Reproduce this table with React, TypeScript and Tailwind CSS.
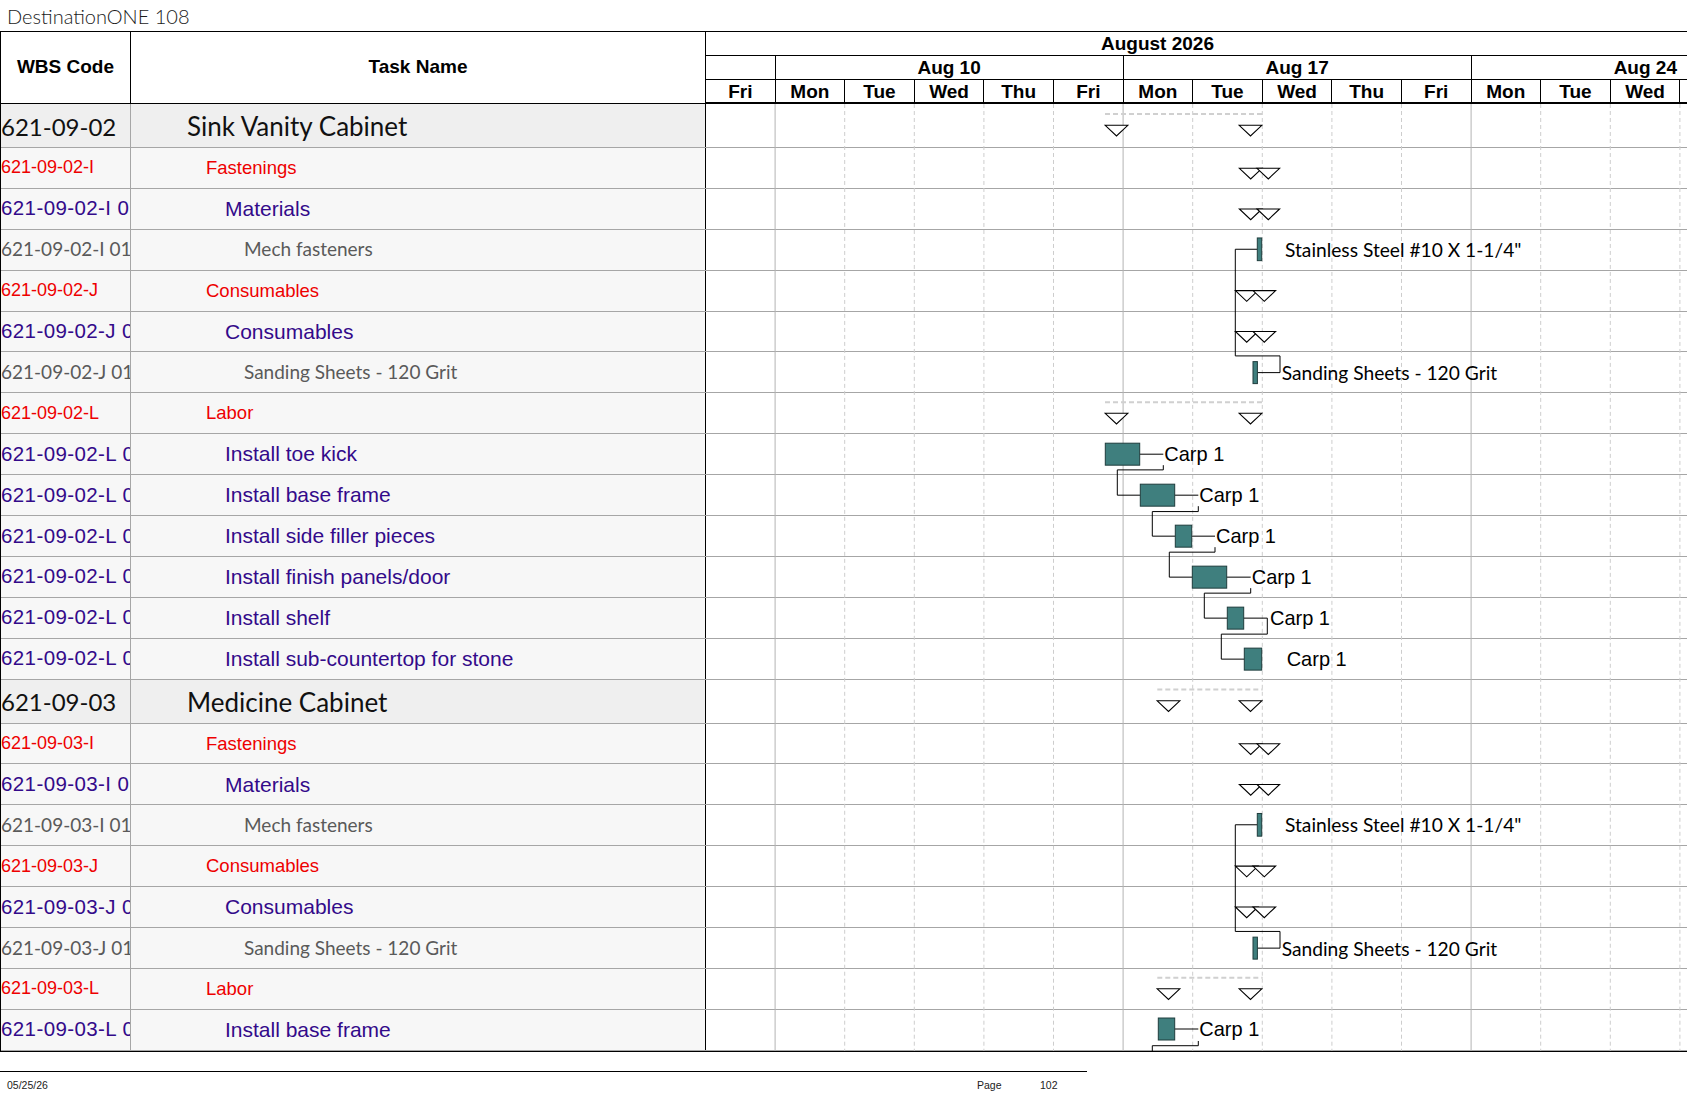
import React from 'react'

// Gantt print view — day columns are 69.6px wide, chart starts at x=706
const D = 69.6
const days = ['Fri', 'Mon', 'Tue', 'Wed', 'Thu', 'Fri', 'Mon', 'Tue', 'Wed', 'Thu', 'Fri', 'Mon', 'Tue', 'Wed']

type Level = 0 | 1 | 2 | 3

interface Row {
  code: string
  name: string
  level: Level
}

const rows: Row[] = [
  { code: '621-09-02', name: 'Sink Vanity Cabinet', level: 0 },
  { code: '621-09-02-I', name: 'Fastenings', level: 1 },
  { code: '621-09-02-I 01', name: 'Materials', level: 2 },
  { code: '621-09-02-I 01-01', name: 'Mech fasteners', level: 3 },
  { code: '621-09-02-J', name: 'Consumables', level: 1 },
  { code: '621-09-02-J 01', name: 'Consumables', level: 2 },
  { code: '621-09-02-J 01-01', name: 'Sanding Sheets - 120 Grit', level: 3 },
  { code: '621-09-02-L', name: 'Labor', level: 1 },
  { code: '621-09-02-L 01', name: 'Install toe kick', level: 2 },
  { code: '621-09-02-L 02', name: 'Install base frame', level: 2 },
  { code: '621-09-02-L 03', name: 'Install side filler pieces', level: 2 },
  { code: '621-09-02-L 04', name: 'Install finish panels/door', level: 2 },
  { code: '621-09-02-L 05', name: 'Install shelf', level: 2 },
  { code: '621-09-02-L 06', name: 'Install sub-countertop for stone', level: 2 },
  { code: '621-09-03', name: 'Medicine Cabinet', level: 0 },
  { code: '621-09-03-I', name: 'Fastenings', level: 1 },
  { code: '621-09-03-I 01', name: 'Materials', level: 2 },
  { code: '621-09-03-I 01-01', name: 'Mech fasteners', level: 3 },
  { code: '621-09-03-J', name: 'Consumables', level: 1 },
  { code: '621-09-03-J 01', name: 'Consumables', level: 2 },
  { code: '621-09-03-J 01-01', name: 'Sanding Sheets - 120 Grit', level: 3 },
  { code: '621-09-03-L', name: 'Labor', level: 1 },
  { code: '621-09-03-L 01', name: 'Install base frame', level: 2 },
]

const levelConfig = {
  0: {
    row: 'h-[44px]',
    bg: 'bg-[#efefef]',
    code: "text-[24px] text-[#111] font-['Lato',sans-serif] pt-[2px]",
    name: "pl-[56px] text-[26px] text-[#111] font-['Lato',sans-serif] pt-[2px]",
  },
  1: {
    row: 'h-[40.9px]',
    bg: 'bg-[#f7f7f7]',
    code: "text-[18px] text-[#ee0000] font-['Liberation_Sans',Arial,sans-serif]",
    name: "pl-[75px] text-[18.5px] text-[#ee0000] font-['Liberation_Sans',Arial,sans-serif]",
  },
  2: {
    row: 'h-[40.9px]',
    bg: 'bg-[#f7f7f7]',
    code: "text-[20.5px] tracking-[0.4px] text-[#330a8a] font-['Liberation_Sans',Arial,sans-serif]",
    name: "pl-[94px] text-[21px] text-[#330a8a] font-['Liberation_Sans',Arial,sans-serif]",
  },
  3: {
    row: 'h-[40.9px]',
    bg: 'bg-[#f7f7f7]',
    code: "text-[19px] text-[#5a5a5a] font-['Lato',sans-serif]",
    name: "pl-[113px] text-[19px] text-[#5a5a5a] font-['Lato',sans-serif]",
  },
}

const TEAL = '#3f7f7e'
const BAR_EDGE = '#1f3d3d'

function Tri({ cx, top }: { cx: number; top: number }) {
  return (
    <polygon
      points={`${cx - 11.3},${top} ${cx + 11.3},${top} ${cx},${top + 10.7}`}
      fill="white"
      stroke="black"
      strokeWidth={1.1}
    />
  )
}

function DoubleTri({ cx, top }: { cx: number; top: number }) {
  return (
    <>
      <Tri cx={cx} top={top} />
      <Tri cx={cx + 17.6} top={top} />
    </>
  )
}

function Bar({ x, y, w, h = 22 }: { x: number; y: number; w: number; h?: number }) {
  return <rect x={x} y={y} width={w} height={h} fill={TEAL} stroke={BAR_EDGE} strokeWidth={1} />
}

function Line({ pts }: { pts: number[][] }) {
  return <polyline points={pts.map(p => p.join(',')).join(' ')} fill="none" stroke="black" strokeWidth={1} />
}

function Label({ x, y, children, calibri }: { x: number; y: number; children: string; calibri?: boolean }) {
  return (
    <text
      x={x}
      y={y}
      dominantBaseline="central"
      fontSize={calibri ? 19.2 : 20}
      fontFamily={calibri ? 'Lato, sans-serif' : "'Liberation Sans', Arial, sans-serif"}
      fill="black"
    >
      {children}
    </text>
  )
}

function Summary({ top, x1, tris, dashOff, triOff }: { top: number; x1: number; tris: number[]; dashOff: number; triOff: number }) {
  return (
    <>
      <line x1={x1} x2={556.7} y1={top + dashOff} y2={top + dashOff} stroke="#d0d0d0" strokeWidth={2} strokeDasharray="5 3" />
      {tris.map(cx => (
        <Tri key={cx} cx={cx} top={top + triOff} />
      ))}
    </>
  )
}

// fastenings + consumables block, same in both cabinets
function MaterialBlock({ g }: { g: number }) {
  return (
    <>
      <DoubleTri cx={544.7} top={g + 64.3} />
      <DoubleTri cx={544.7} top={g + 105} />
      <Line pts={[[551.3, g + 145.3], [529.3, g + 145.3], [529.3, g + 252], [574, g + 252], [574, g + 268.7], [551.4, g + 268.7]]} />
      <Bar x={551.3} y={g + 134} w={4.4} h={22.7} />
      <Label x={579} y={g + 145.5} calibri>Stainless Steel #10 X 1-1/4"</Label>
      <DoubleTri cx={540.7} top={g + 186.7} />
      <DoubleTri cx={540.7} top={g + 227.5} />
      <Bar x={547} y={g + 257.7} w={4.4} h={22} />
      <Label x={575.7} y={g + 269} calibri>Sanding Sheets - 120 Grit</Label>
    </>
  )
}

const carpBars = [
  { x: 399.3, w: 34.4, y: 339.3, label: 457.3 },
  { x: 434.3, w: 34.4, y: 380.3, label: 492.3 },
  { x: 469.3, w: 16.4, y: 421.3, label: 509 },
  { x: 486.3, w: 34.4, y: 462.3, label: 544.7 },
  { x: 521.3, w: 16.4, y: 503.3, label: 563 },
  { x: 538.3, w: 17.4, y: 544.3, label: 579.7 },
]

const carpLinks = [
  [[457.3, 361.3], [457.3, 366], [411.3, 366], [411.3, 391.3], [434.3, 391.3]],
  [[492.3, 402.3], [492.3, 407.7], [446.3, 407.7], [446.3, 432.3], [469.3, 432.3]],
  [[509, 443.3], [509, 448.3], [463.3, 448.3], [463.3, 473.3], [486.3, 473.3]],
  [[544.7, 484.3], [544.7, 489.3], [498.3, 489.3], [498.3, 514.3], [521.3, 514.3]],
  [[561.3, 514.3], [561.3, 530.3], [515.3, 530.3], [515.3, 555.3], [538.3, 555.3]],
]

function GanttLayer() {
  const g2 = 575.7
  return (
    <svg className="absolute left-[705px] top-0 w-[981px] h-full" viewBox="0 0 981 947" preserveAspectRatio="none">
      {/* day grid */}
      {Array.from({ length: 14 }, (_, i) => i + 1).map(k => {
        const x = k * D - 0.5
        const week = k === 1 || k === 6 || k === 11
        return (
          <line
            key={k}
            x1={x}
            x2={x}
            y1={0}
            y2={947}
            stroke={week ? '#b4b4b4' : '#cdcdcd'}
            strokeWidth={1}
            strokeDasharray={week ? undefined : '4 3'}
          />
        )
      })}

      {/* Sink Vanity Cabinet */}
      <Summary top={0} x1={399} tris={[410.5, 544.5]} dashOff={10} triOff={21.3} />
      <MaterialBlock g={0} />
      <Summary top={289.4} x1={399} tris={[410.5, 544.5]} dashOff={9} triOff={20} />
      {carpLinks.map((pts, i) => (
        <Line key={i} pts={pts} />
      ))}
      {carpBars.map((b, i) => (
        <g key={i}>
          {i < 5 && <Line pts={[[b.x + b.w, b.y + 11], [i === 4 ? 561.3 : b.label, b.y + 11]]} />}
          <Bar x={b.x} y={b.y} w={b.w} />
          <Label x={b.label + 1} y={b.y + 11}>Carp 1</Label>
        </g>
      ))}

      {/* Medicine Cabinet */}
      <Summary top={g2} x1={451.3} tris={[462.5, 544.5]} dashOff={10} triOff={21.3} />
      <MaterialBlock g={g2} />
      <Summary top={865.1} x1={451.3} tris={[462.5, 544.5]} dashOff={9} triOff={20} />
      <Line pts={[[492.3, 937.3], [492.3, 942], [446.3, 942], [446.3, 960]]} />
      <Line pts={[[468.7, 925.3], [492.3, 925.3]]} />
      <Bar x={452.3} y={914.3} w={16.4} />
      <Label x={493.3} y={925.3}>Carp 1</Label>
    </svg>
  )
}

export default function App() {
  return (
    <div className="w-[1687px] h-[1097px] bg-white overflow-hidden text-black">
      {/* Page title */}
      <div className="h-[31px] pl-[7px] flex items-center text-[20px] font-light text-[#1a1a1a] font-['Lato',sans-serif]">
        DestinationONE 108
      </div>

      <div className="border-t border-l border-b-[1.5px] border-black">
        {/* Header */}
        <div className="flex h-[72px] font-bold text-[19px] font-['Liberation_Sans',Arial,sans-serif]">
          <div className="w-[130px] shrink-0 border-r border-b border-black flex items-center justify-center pb-[1px]">
            WBS Code
          </div>
          <div className="w-[575px] shrink-0 border-r border-b border-black flex items-center justify-center pb-[1px]">
            Task Name
          </div>
          <div className="flex-1 flex flex-col overflow-hidden">
            <div className="h-[24px] border-b border-black flex">
              <div className="w-[903px] text-center leading-[23px]">August 2026</div>
            </div>
            <div className="h-[24px] border-b border-black flex leading-[23px]">
              <div className="w-[69.6px] shrink-0 border-r border-black" />
              <div className="w-[348px] shrink-0 border-r border-black text-center">Aug 10</div>
              <div className="w-[348px] shrink-0 border-r border-black text-center">Aug 17</div>
              <div className="flex-1 text-right pr-[10px]">Aug 24</div>
            </div>
            <div className="h-[24px] border-b-[2.5px] border-black flex leading-[23px]">
              {days.map((d, i) => (
                <div key={i} className="w-[69.6px] shrink-0 border-r border-black text-center">
                  {d}
                </div>
              ))}
            </div>
          </div>
        </div>

        {/* Body rows + gantt drawing */}
        <div className="relative">
          {rows.map((r, i) => {
            const cfg = levelConfig[r.level]
            return (
              <div key={i} className={`flex border-b border-[#a6a6a6] ${cfg.row}`}>
                <div className={`w-[130px] shrink-0 border-r border-[#a6a6a6] flex items-center overflow-hidden whitespace-nowrap ${cfg.bg} ${cfg.code}`}>
                  {r.code}
                </div>
                <div className={`w-[575px] shrink-0 border-r border-black flex items-center whitespace-nowrap ${cfg.bg} ${cfg.name}`}>
                  {r.name}
                </div>
                <div className="flex-1 bg-white" />
              </div>
            )
          })}
          <GanttLayer />
        </div>
      </div>

      {/* Footer */}
      <div className="mt-[19px] w-[1087px] border-t-[1.5px] border-black">
        <div className="flex pl-[7px] pt-[6px] text-[10.5px] font-['Liberation_Sans',Arial,sans-serif] text-[#222]">
          <span className="w-[970px]">05/25/26</span>
          <span className="w-[63px]">Page</span>
          <span>102</span>
        </div>
      </div>
    </div>
  )
}
